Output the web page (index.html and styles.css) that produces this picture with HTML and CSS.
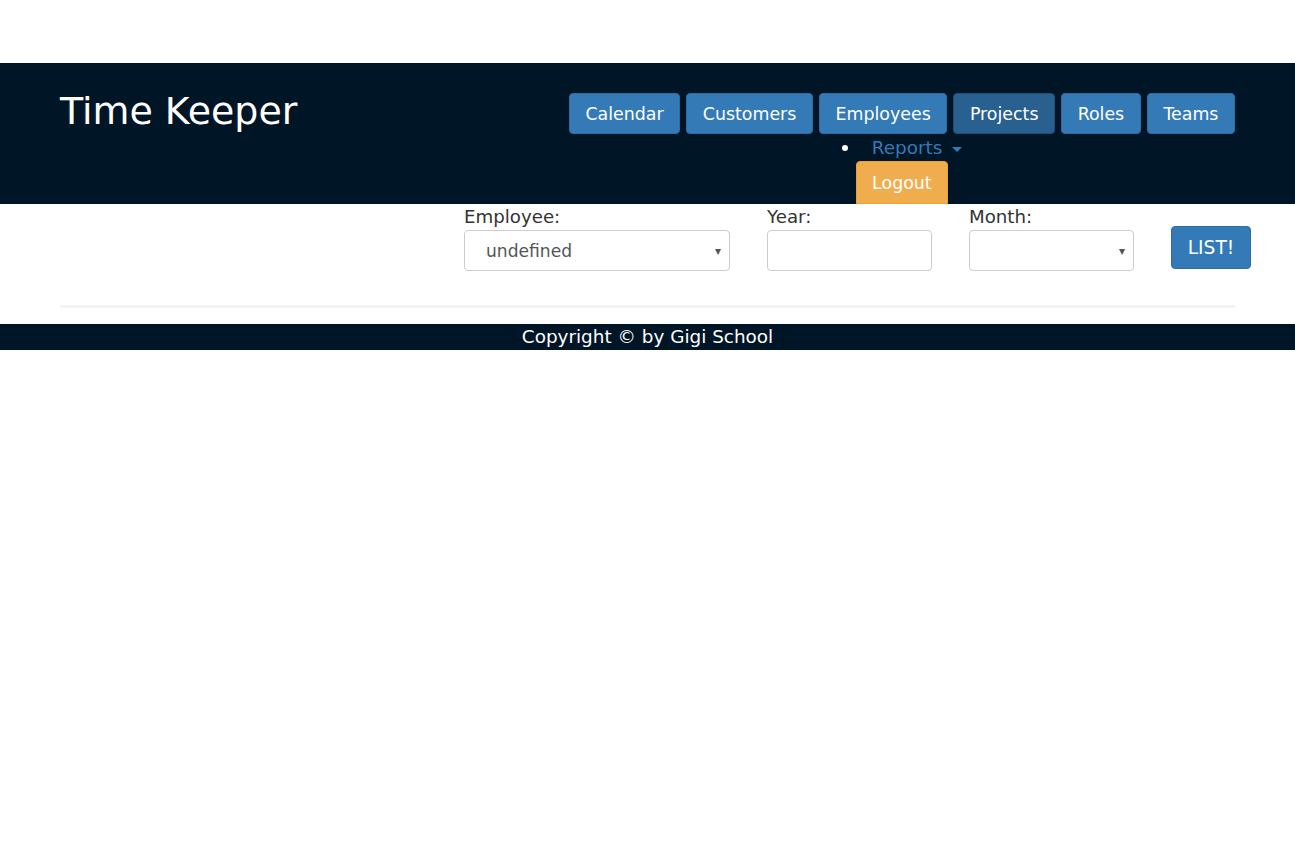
FILE: index.html
```html
<!DOCTYPE html>
<html>
<head>
<meta charset="utf-8">
<title>Time Keeper</title>
<link rel="stylesheet" href="styles.css">
</head>
<body>
<header class="topbar">
  <div class="container header-inner">
    <h1 class="brand">Time Keeper</h1>
    <nav class="nav">
      <div class="nav-buttons">
        <a class="btn btn-primary">Calendar</a>
        <a class="btn btn-primary">Customers</a>
        <a class="btn btn-primary">Employees</a>
        <a class="btn btn-primary active">Projects</a>
        <a class="btn btn-primary">Roles</a>
        <a class="btn btn-primary">Teams</a>
      </div>
      <div class="reports-row">
        <span class="bullet"></span>
        <a class="reports">Reports <span class="caret"></span></a>
      </div>
      <a class="btn btn-warning logout">Logout</a>
    </nav>
  </div>
</header>
<main class="content">
  <form class="filter">
    <div class="field field-employee">
      <label>Employee:</label>
      <div class="select"><span>undefined</span><span class="arrow">▾</span></div>
    </div>
    <div class="field field-year">
      <label>Year:</label>
      <div class="input"></div>
    </div>
    <div class="field field-month">
      <label>Month:</label>
      <div class="select"><span></span><span class="arrow">▾</span></div>
    </div>
    <button type="button" class="btn btn-primary list-btn">LIST!</button>
  </form>
  <div class="container"><hr class="rule"></div>
</main>
<footer class="footer">Copyright © by Gigi School</footer>
</body>
</html>
```
FILE: styles.css
```css
html, body {
  margin: 0;
  padding: 0;
  background: #fff;
}
body {
  font-family: "DejaVu Sans", Verdana, sans-serif;
  font-size: 16px;
  color: #333;
  padding-top: 63px;
}
.container {
  padding: 0 60px;
}
.topbar {
  background: #001526;
  height: 141px;
}
.header-inner {
  display: flex;
  justify-content: space-between;
  align-items: flex-start;
  padding-top: 30px;
}
.brand {
  margin: 0;
  font-weight: normal;
  font-size: 37.9px;
  line-height: 36px;
  color: #fff;
  padding-top: 0;
}
.nav {
  display: flex;
  flex-direction: column;
  align-items: center;
}
.nav-buttons {
  display: flex;
  gap: 6px;
}
.btn {
  display: inline-flex;
  align-items: center;
  justify-content: center;
  box-sizing: border-box;
  font-family: "DejaVu Sans", Verdana, sans-serif;
  font-size: 17.4px;
  color: #fff;
  border-radius: 4px;
  border: 1px solid transparent;
  height: 41px;
  padding: 0 15.6px;
  cursor: pointer;
  text-decoration: none;
}
.btn-primary {
  background: #337ab7;
  border-color: #2e6da4;
}
.btn-primary.active {
  background: #286090;
  border-color: #204d74;
}
.btn-warning {
  background: #f0ad4e;
  border-color: #eea236;
}
.reports-row {
  display: flex;
  align-items: center;
  height: 27px;
  margin-top: 0;
}
.bullet {
  width: 6px;
  height: 6px;
  border-radius: 50%;
  background: #fff;
  margin-right: 24px;
}
.reports {
  color: #337ab7;
  font-size: 18.4px;
}
.caret {
  display: inline-block;
  width: 0;
  height: 0;
  border-left: 5px solid transparent;
  border-right: 5px solid transparent;
  border-top: 5px solid #337ab7;
  vertical-align: middle;
  margin-left: 4px;
}
.logout {
  height: 43px;
  width: 92px;
  padding: 0;
  border-bottom-left-radius: 0;
  border-bottom-right-radius: 0;
}
.filter {
  display: flex;
  justify-content: flex-end;
  align-items: flex-end;
  gap: 37px;
  padding-right: 44px;
  margin: 0;
  padding-top: 0;
}
.field {
  display: flex;
  flex-direction: column;
}
.field label {
  font-size: 18.2px;
  line-height: 26px;
  color: #333;
}
.field-employee { width: 266px; }
.field-year { width: 165px; }
.field-month { width: 165px; }
.select, .input {
  box-sizing: border-box;
  height: 41px;
  border: 1px solid #ccc;
  border-radius: 4px;
  background: #fff;
  display: flex;
  align-items: center;
  justify-content: space-between;
  padding: 0 8px 0 21px;
  color: #555;
  font-size: 17.1px;
}
.arrow {
  font-size: 12px;
  color: #555;
}
.list-btn {
  width: 80px;
  height: 43px;
  padding: 0;
  margin-bottom: 2px;
  font-size: 18.6px;
}
.rule {
  border: 0;
  height: 3px;
  background: #f3f3f3;
  margin: 34px 0 16px;
}
.footer {
  background: #001526;
  color: #fff;
  text-align: center;
  height: 26px;
  line-height: 26px;
  font-size: 18.4px;
}
```
